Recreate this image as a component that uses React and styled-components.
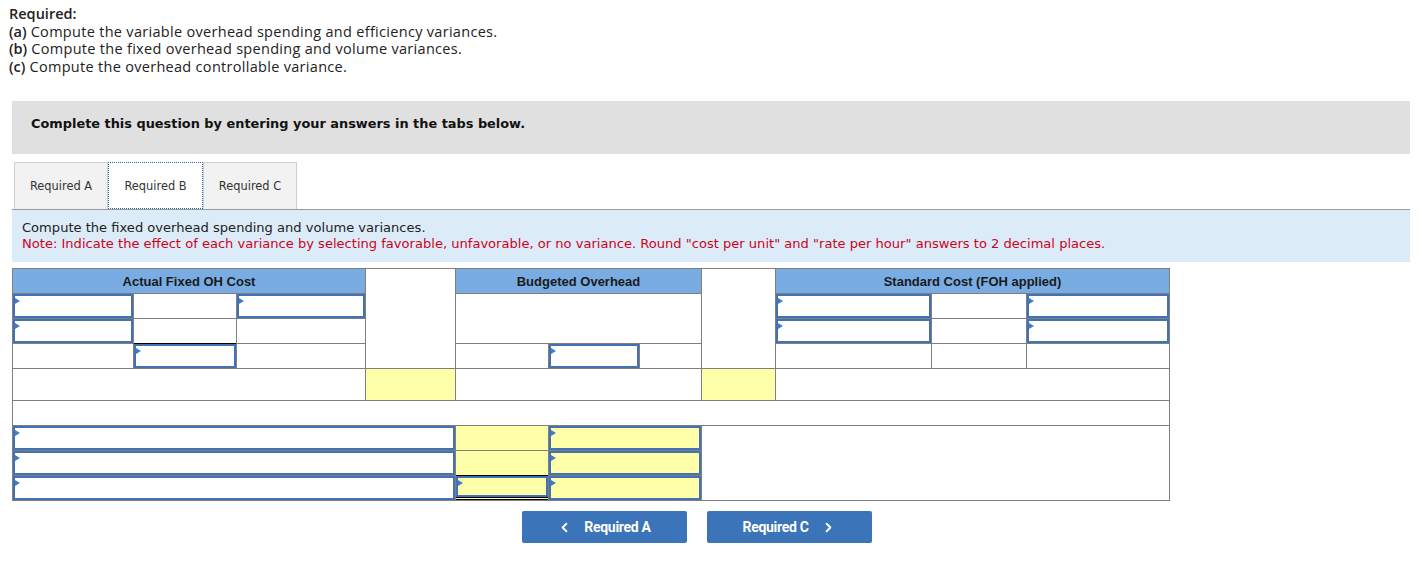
import React from "react";
import styled, { createGlobalStyle, css } from "styled-components";
import { ChevronLeft, ChevronRight } from "lucide-react";

const Global = createGlobalStyle`
  html, body { margin: 0; padding: 0; background: #fff; }
  body { font-family: "Liberation Sans", Arial, sans-serif; }
`;

const Page = styled.div`
  padding: 5px 0 0 9px;
  width: 1413px;
`;

const Requirements = styled.div`
  font-family: "Open Sans", Lato, sans-serif;
  font-size: 14.5px;
  letter-spacing: 0.3px;
  line-height: 17.5px;
  color: #222;
`;

const Line = styled.div`
  white-space: nowrap;
`;
const Strong = styled.span`
  font-weight: 600;
  letter-spacing: 0;
`;

const Inner = styled.div`
  margin-left: 3px;
`;

const Instruction = styled.div`
  margin-top: 26px;
  width: 1398px;
  height: 53px;
  background: #e0e0e0;
  display: flex;
  align-items: center;
  padding: 0 0 8px 19px;
  box-sizing: border-box;
  font-family: "DejaVu Sans", Verdana, sans-serif;
  font-weight: 700;
  font-size: 12.9px;
  color: #111;
`;

const Tabs = styled.div`
  margin-top: 8px;
  margin-left: 2px;
  display: flex;
  height: 47px;
`;

const Tab = styled.div`
  width: 94px;
  box-sizing: border-box;
  display: flex;
  align-items: center;
  justify-content: center;
  font-family: Tahoma, "DejaVu Sans", sans-serif;
  font-size: 11.4px;
  color: #333;
  background: #f2f2f2;
  border: 1px solid #cfcfcf;
  border-bottom: none;
  ${(p) =>
    p.$active &&
    css`
      background: #fff;
      border: 1px dotted #2f5fb3;
      width: 95px;
    `}
`;

const Prompt = styled.div`
  width: 1398px;
  height: 53px;
  box-sizing: border-box;
  background: #dcebf8;
  border-top: 1px solid #9a9a9a;
  padding: 10px 0 0 10px;
  font-family: "DejaVu Sans", Verdana, sans-serif;
  font-size: 13.07px;
  line-height: 16px;
  color: #222;
  white-space: nowrap;
`;

const Note = styled.div`
  color: #d0021b;
`;

const Grid = styled.div`
  margin-top: 6px;
  display: grid;
  grid-template-columns: 120px 102px 128px 89px 92px 90px 61px 73px 155px 94px 142px;
  grid-template-rows: 24px 24px 24px 24px 31px 24px 24px 24px 24px;
  gap: 1px;
  padding: 1px;
  background: #7f7f7f;
  width: max-content;
`;

const Cell = styled.div`
  grid-column: ${(p) => p.$col};
  grid-row: ${(p) => p.$row};
  background: ${(p) => (p.$yellow ? "#ffffaa" : "#fff")};
  box-sizing: border-box;
  ${(p) =>
    p.$topRule &&
    css`
      box-shadow: 0 -1px 0 #000;
    `}
  ${(p) =>
    p.$total &&
    css`
      box-shadow: 0 -1px 0 #000;
      border-bottom: 3px double #000;
    `}
`;

const Head = styled.div`
  grid-column: ${(p) => p.$col};
  grid-row: 1;
  background: #78ace3;
  display: flex;
  align-items: center;
  justify-content: center;
  font-family: "Liberation Sans", Arial, sans-serif;
  font-weight: 700;
  font-size: 13px;
  color: #1a1a1a;
`;

const InputBox = styled.div`
  height: 100%;
  box-sizing: border-box;
  border: 2px solid #4272b3;
  background: ${(p) => (p.$yellow ? "#ffffaa" : "#fff")};
  position: relative;
  &::before {
    content: "";
    position: absolute;
    left: 0;
    top: 2px;
    border-left: 5px solid #3f7bd0;
    border-top: 3px solid transparent;
    border-bottom: 3px solid transparent;
  }
`;

const Input = ({ col, row, yellow, topRule, total }) => (
  <Cell $col={col} $row={row} $yellow={yellow} $topRule={topRule} $total={total}>
    <InputBox $yellow={yellow} />
  </Cell>
);

const Nav = styled.div`
  margin-top: 10px;
  width: 1369px;
  display: flex;
  justify-content: center;
  gap: 20px;
`;

const NavButton = styled.button`
  width: 165px;
  height: 32px;
  border: none;
  border-radius: 2px;
  background: #3b74b8;
  color: #fff;
  font-family: Roboto, "Liberation Sans", sans-serif;
  font-weight: 700;
  font-size: 14px;
  letter-spacing: -0.3px;
  display: flex;
  align-items: center;
  justify-content: center;
  gap: 12px;
  padding: 0;
  cursor: pointer;
`;

export default function App() {
  return (
    <>
      <Global />
      <Page>
        <Requirements>
          <Line><Strong>Required:</Strong></Line>
          <Line><Strong>(a)</Strong> Compute the variable overhead spending and efficiency variances.</Line>
          <Line><Strong>(b)</Strong> Compute the fixed overhead spending and volume variances.</Line>
          <Line><Strong>(c)</Strong> Compute the overhead controllable variance.</Line>
        </Requirements>
        <Inner>
          <Instruction>Complete this question by entering your answers in the tabs below.</Instruction>
          <Tabs>
            <Tab>Required A</Tab>
            <Tab $active>Required B</Tab>
            <Tab>Required C</Tab>
          </Tabs>
          <Prompt>
            <div>Compute the fixed overhead spending and volume variances.</div>
            <Note>
              Note: Indicate the effect of each variance by selecting favorable, unfavorable, or no variance. Round "cost per unit" and "rate per hour" answers to 2 decimal places.
            </Note>
          </Prompt>
          <Grid>
            <Head $col="1 / 4">Actual Fixed OH Cost</Head>
            <Cell $col="4" $row="1 / 5" />
            <Head $col="5 / 8">Budgeted Overhead</Head>
            <Cell $col="8" $row="1 / 5" />
            <Head $col="9 / 12">Standard Cost (FOH applied)</Head>

            <Input col="1" row="2" />
            <Cell $col="2" $row="2" />
            <Input col="3" row="2" />
            <Cell $col="5 / 8" $row="2 / 4" />
            <Input col="9" row="2" />
            <Cell $col="10" $row="2" />
            <Input col="11" row="2" />

            <Input col="1" row="3" />
            <Cell $col="2" $row="3" />
            <Cell $col="3" $row="3" />
            <Input col="9" row="3" />
            <Cell $col="10" $row="3" />
            <Input col="11" row="3" />

            <Cell $col="1" $row="4" />
            <Input col="2" row="4" topRule />
            <Cell $col="3" $row="4" />
            <Cell $col="5" $row="4" />
            <Input col="6" row="4" />
            <Cell $col="7" $row="4" />
            <Cell $col="9" $row="4" />
            <Cell $col="10" $row="4" />
            <Cell $col="11" $row="4" />

            <Cell $col="1 / 4" $row="5" />
            <Cell $col="4" $row="5" $yellow />
            <Cell $col="5 / 8" $row="5" />
            <Cell $col="8" $row="5" $yellow />
            <Cell $col="9 / 12" $row="5" />

            <Cell $col="1 / 12" $row="6" />

            <Input col="1 / 5" row="7" />
            <Cell $col="5" $row="7" $yellow />
            <Input col="6 / 8" row="7" yellow />
            <Cell $col="8 / 12" $row="7 / 10" />

            <Input col="1 / 5" row="8" />
            <Cell $col="5" $row="8" $yellow />
            <Input col="6 / 8" row="8" yellow />

            <Input col="1 / 5" row="9" />
            <Input col="5" row="9" yellow total />
            <Input col="6 / 8" row="9" yellow />
          </Grid>
          <Nav>
            <NavButton>
              <ChevronLeft size={15} strokeWidth={3} />
              Required A
            </NavButton>
            <NavButton>
              Required C
              <ChevronRight size={15} strokeWidth={3} />
            </NavButton>
          </Nav>
        </Inner>
      </Page>
    </>
  );
}
